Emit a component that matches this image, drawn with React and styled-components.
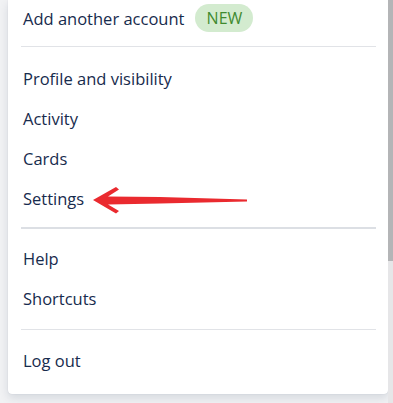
import React from 'react'
import styled, { createGlobalStyle } from 'styled-components'

const GlobalStyle = createGlobalStyle`
  html, body {
    margin: 0;
    padding: 0;
    background: #f1f2f4;
    overflow: hidden;
  }
  body {
    font-family: 'Open Sans', 'Noto Sans', sans-serif;
  }
`

const Page = styled.div`
  width: 393px;
  height: 403px;
  display: flex;
  align-items: flex-start;
  position: relative;
`

const Panel = styled.div`
  width: 380px;
  margin-left: 8px;
  background: #fff;
  border-radius: 0 0 4px 4px;
  box-shadow: 0 4px 10px rgba(9, 30, 66, 0.12), 0 0 1px rgba(9, 30, 66, 0.2);
`

const Section = styled.div`
  display: flex;
  flex-direction: column;
  padding: ${(p) => p.pad || '10px 0'};
`

const Item = styled.div`
  height: ${(p) => p.h || 40}px;
  display: flex;
  align-items: center;
  gap: 11px;
  padding: 0 15px;
  font-size: 16.5px;
  color: #172b4d;
`

const Badge = styled.span`
  display: inline-flex;
  align-items: center;
  justify-content: center;
  width: 58px;
  height: 28px;
  border-radius: 14px;
  background: #d3ebcf;
  color: #3f8a30;
  font-size: 16px;
`

const Divider = styled.hr`
  border: none;
  margin: 0 12px 0 13px;
  height: ${(p) => p.thick ? '2px' : '1px'};
  background: ${(p) => p.thick ? '#dcdfe4' : '#e1e3e7'};
`

const Scrollbar = styled.div`
  width: 5px;
  height: 403px;
  background: #e6e6e8;
  display: flex;
  flex-direction: column;
`

const Thumb = styled.div`
  height: 261px;
  background: #b4b5b7;
`

const Arrow = styled.svg`
  position: absolute;
  left: 0;
  top: 0;
  pointer-events: none;
`

export default function App() {
  return (
    <>
      <GlobalStyle />
      <Page>
        <Panel>
          <Section pad='0 0 10px'>
            <Item h={36}>
              Add another account <Badge>NEW</Badge>
            </Item>
          </Section>
          <Divider />
          <Section pad='11px 0 9px'>
            <Item>Profile and visibility</Item>
            <Item>Activity</Item>
            <Item>Cards</Item>
            <Item>Settings</Item>
          </Section>
          <Divider thick />
          <Section pad='9px 0 11px'>
            <Item>Help</Item>
            <Item>Shortcuts</Item>
          </Section>
          <Divider />
          <Section pad='10px 0 14px'>
            <Item>Log out</Item>
          </Section>
        </Panel>
        <Scrollbar>
          <Thumb />
        </Scrollbar>
        <Arrow width='393' height='403' viewBox='0 0 393 403'>
          <polygon
            fill='#ea2a2f'
            points='93,200 116,187 119,189.5 108,196.5 160,197 247,199.5 247,201.5 160,203.5 108,204.5 119,211 116,213.5'
          />
        </Arrow>
      </Page>
    </>
  )
}
